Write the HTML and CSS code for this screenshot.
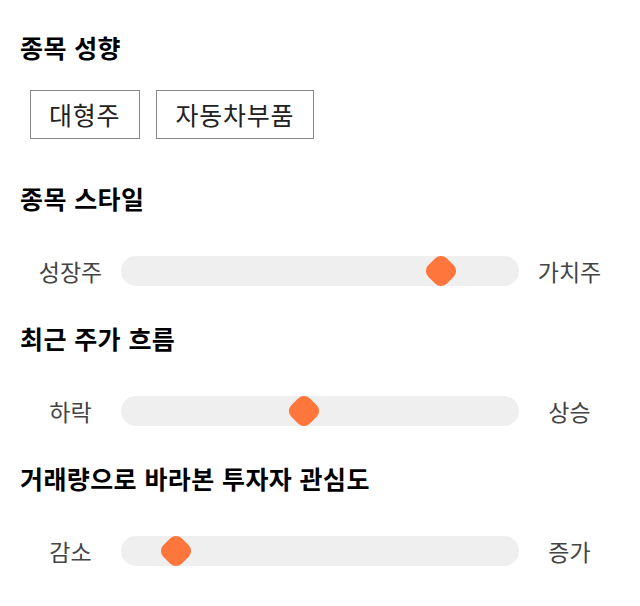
FILE: index.html
```html
<!DOCTYPE html>
<html lang="ko">
    <head>
        <meta charset="UTF-8">
        <meta name="viewport" content="width=device-width, initial-scale=1.0">
        <title>종목 분석</title>
        <link rel="stylesheet" href="styles.css">
    </head>
<body>
    <div class="page">
        <section class="block">
            <h2>종목 성향</h2>
            <div class="tags">
                <span class="tag">대형주</span>
                <span class="tag">자동차부품</span>
            </div>
        </section>

        <section class="block">
            <h2>종목 스타일</h2>
            <div class="scale">
                <span class="scale-label">성장주</span>
                <div class="track"><span class="thumb" style="left: 76.6%"></span></div>
                <span class="scale-label">가치주</span>
            </div>
        </section>

        <section class="block">
            <h2>최근 주가 흐름</h2>
            <div class="scale">
                <span class="scale-label">하락</span>
                <div class="track"><span class="thumb" style="left: 42.1%"></span></div>
                <span class="scale-label">상승</span>
            </div>
        </section>

        <section class="block">
            <h2>거래량으로 바라본 투자자 관심도</h2>
            <div class="scale">
                <span class="scale-label">감소</span>
                <div class="track"><span class="thumb" style="left: 10.1%"></span></div>
                <span class="scale-label">증가</span>
            </div>
        </section>
    </div>
</body>
</html>
```

FILE: styles.css
```css
body {
    margin: 0;
    font-family: "Noto Sans CJK KR", "Noto Sans", sans-serif;
    color: #000;
    background: #fff;
}
.page {
    display: flex;
    flex-direction: column;
    gap: 36px;
    padding: 31px 20px 20px;
}
.block h2 {
    margin: 0;
    font-size: 25px;
    line-height: 32px;
    font-weight: bold;
    letter-spacing: 0.4px;
}
.tags {
    display: flex;
    gap: 16px;
    padding: 27px 0 7px 10px;
}
.tag {
    border: 1px solid #888;
    padding: 5px 19px 5px 18px;
    font-size: 25px;
    line-height: 37px;
    letter-spacing: 0.8px;
    color: #222;
}
.scale {
    display: flex;
    align-items: center;
    margin-top: 42px;
}
.scale-label {
    width: 101px;
    text-align: center;
    font-size: 23px;
    line-height: 30px;
    color: #444;
}
.track {
    position: relative;
    flex: 1;
    height: 30px;
    border-radius: 15px;
    background: #efefef;
}
.thumb {
    position: absolute;
    top: 2px;
    width: 26px;
    height: 26px;
    margin-left: 2px;
    border-radius: 8px;
    background: #ff763d;
    transform: rotate(45deg);
}
```
